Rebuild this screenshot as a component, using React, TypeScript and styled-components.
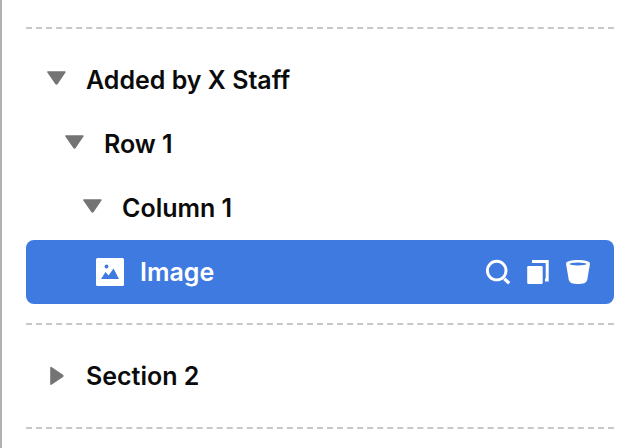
import React, { useState } from "react";
import styled, { createGlobalStyle } from "styled-components";

const GlobalStyle = createGlobalStyle`
  *, *::before, *::after { box-sizing: border-box; }
  body {
    margin: 0;
    background: #fff;
    color: #0b0b0b;
    font-family: Inter, "Liberation Sans", sans-serif;
  }
`;

const Panel = styled.nav`
  min-height: 100vh;
  padding: 27px 20px 0 24px;
  border-left: 2px solid #b1b1b1;
`;

const Divider = styled.hr`
  margin: 0;
  border: 0;
  border-top: 2px dashed #c8c8c8;
`;

const Section = styled.section`
  padding: 19px 0;
`;

const Row = styled.div<{ $indent?: number; $selected?: boolean }>`
  display: flex;
  align-items: center;
  justify-content: space-between;
  height: 64px;
  padding: 0 23px 0 ${({ $indent = 20 }) => $indent}px;
  border-radius: 8px;
  background: ${({ $selected }) => ($selected ? "#3f7ae0" : "transparent")};
  color: ${({ $selected }) => ($selected ? "#fff" : "inherit")};
`;

const ItemButton = styled.button<{ $gap?: number }>`
  display: flex;
  align-items: center;
  gap: ${({ $gap = 20 }) => $gap}px;
  padding: 0;
  border: 0;
  background: none;
  color: inherit;
  font: 600 25px/32px Inter, "Liberation Sans", sans-serif;
  white-space: nowrap;
  cursor: pointer;
`;

const ArrowIcon = styled.svg`
  width: 20px;
  height: 20px;
  fill: #747474;
`;

const ImageIcon = styled.svg`
  width: 28px;
  height: 28px;
`;

const Actions = styled.div`
  display: flex;
  gap: 14px;
`;

const ActionButton = styled.button`
  display: flex;
  padding: 0;
  border: 0;
  background: none;
  color: #fff;
  cursor: pointer;
`;

const ActionIcon = styled.svg`
  width: 26px;
  height: 26px;
`;

function Branch({ label, level = 0, initiallyOpen = true }: { label: string; level?: number; initiallyOpen?: boolean }) {
  const [open, setOpen] = useState(initiallyOpen);
  return (
    <Row $indent={20 + level * 18}>
      <ItemButton aria-expanded={open} onClick={() => setOpen(!open)}>
        <ArrowIcon viewBox="0 0 20 20" aria-hidden="true">
          {open ? (
            <path d="M2 1.200H18.500Q20.500 1.200 19.300 2.800L11.700 14Q10.500 15.600 9.300 14L1.500 2.800Q.5 1.200 2 1.200Z" />
          ) : (
            <path d="M4.200 2Q4.200 0 5.900 1.200L17 8.700Q18.600 9.900 17 11.100L5.900 18.600Q4.200 19.800 4.200 17.800Z" />
          )}
        </ArrowIcon>
        {label}
      </ItemButton>
    </Row>
  );
}

export default function App() {
  return (
    <Panel aria-label="Page structure">
      <GlobalStyle />
      <Divider />
      <Section>
        <Branch label="Added by X Staff" />
        <Branch label="Row 1" level={1} />
        <Branch label="Column 1" level={2} />
        <Row $indent={70} $selected>
          <ItemButton $gap={16}>
            <ImageIcon viewBox="0 0 28 28" aria-hidden="true">
              <rect width="28" height="28" rx="1.500" fill="#fff" />
              <circle cx="10.500" cy="8.500" r="1.900" fill="#3f7ae0" />
              <path d="M5 21L9.500 14L12.500 17.500L17.500 10.500L23 21Z" fill="#3f7ae0" />
            </ImageIcon>
            Image
          </ItemButton>
          <Actions>
            <ActionButton aria-label="Inspect">
              <ActionIcon viewBox="0 0 26 26" fill="none" stroke="currentColor" aria-hidden="true">
                <circle cx="11.700" cy="11.600" r="9.300" strokeWidth="2.900" />
                <path d="M19.300 19.700L24.200 24.200" strokeWidth="3.200" />
              </ActionIcon>
            </ActionButton>
            <ActionButton aria-label="Duplicate">
              <ActionIcon viewBox="0 0 26 26" aria-hidden="true">
                <rect x="2.200" y="7" width="15.500" height="18" rx="1.200" fill="currentColor" />
                <path d="M7 2.500H22.200V21H20" fill="none" stroke="currentColor" strokeWidth="3" />
              </ActionIcon>
            </ActionButton>
            <ActionButton aria-label="Delete">
              <ActionIcon viewBox="0 0 26 26" aria-hidden="true">
                <path fill="currentColor" d="M1 4.500C1 2.200 6.500 1 13 1S25 2.200 25 4.500L22.300 20.500C21.600 24.200 18 25 13 25S4.400 24.200 3.700 20.500Z" />
                <ellipse cx="13" cy="5" rx="8.500" ry="1.500" fill="#3f7ae0" />
              </ActionIcon>
            </ActionButton>
          </Actions>
        </Row>
      </Section>
      <Divider />
      <Section>
        <Branch label="Section 2" initiallyOpen={false} />
      </Section>
      <Divider />
    </Panel>
  );
}
